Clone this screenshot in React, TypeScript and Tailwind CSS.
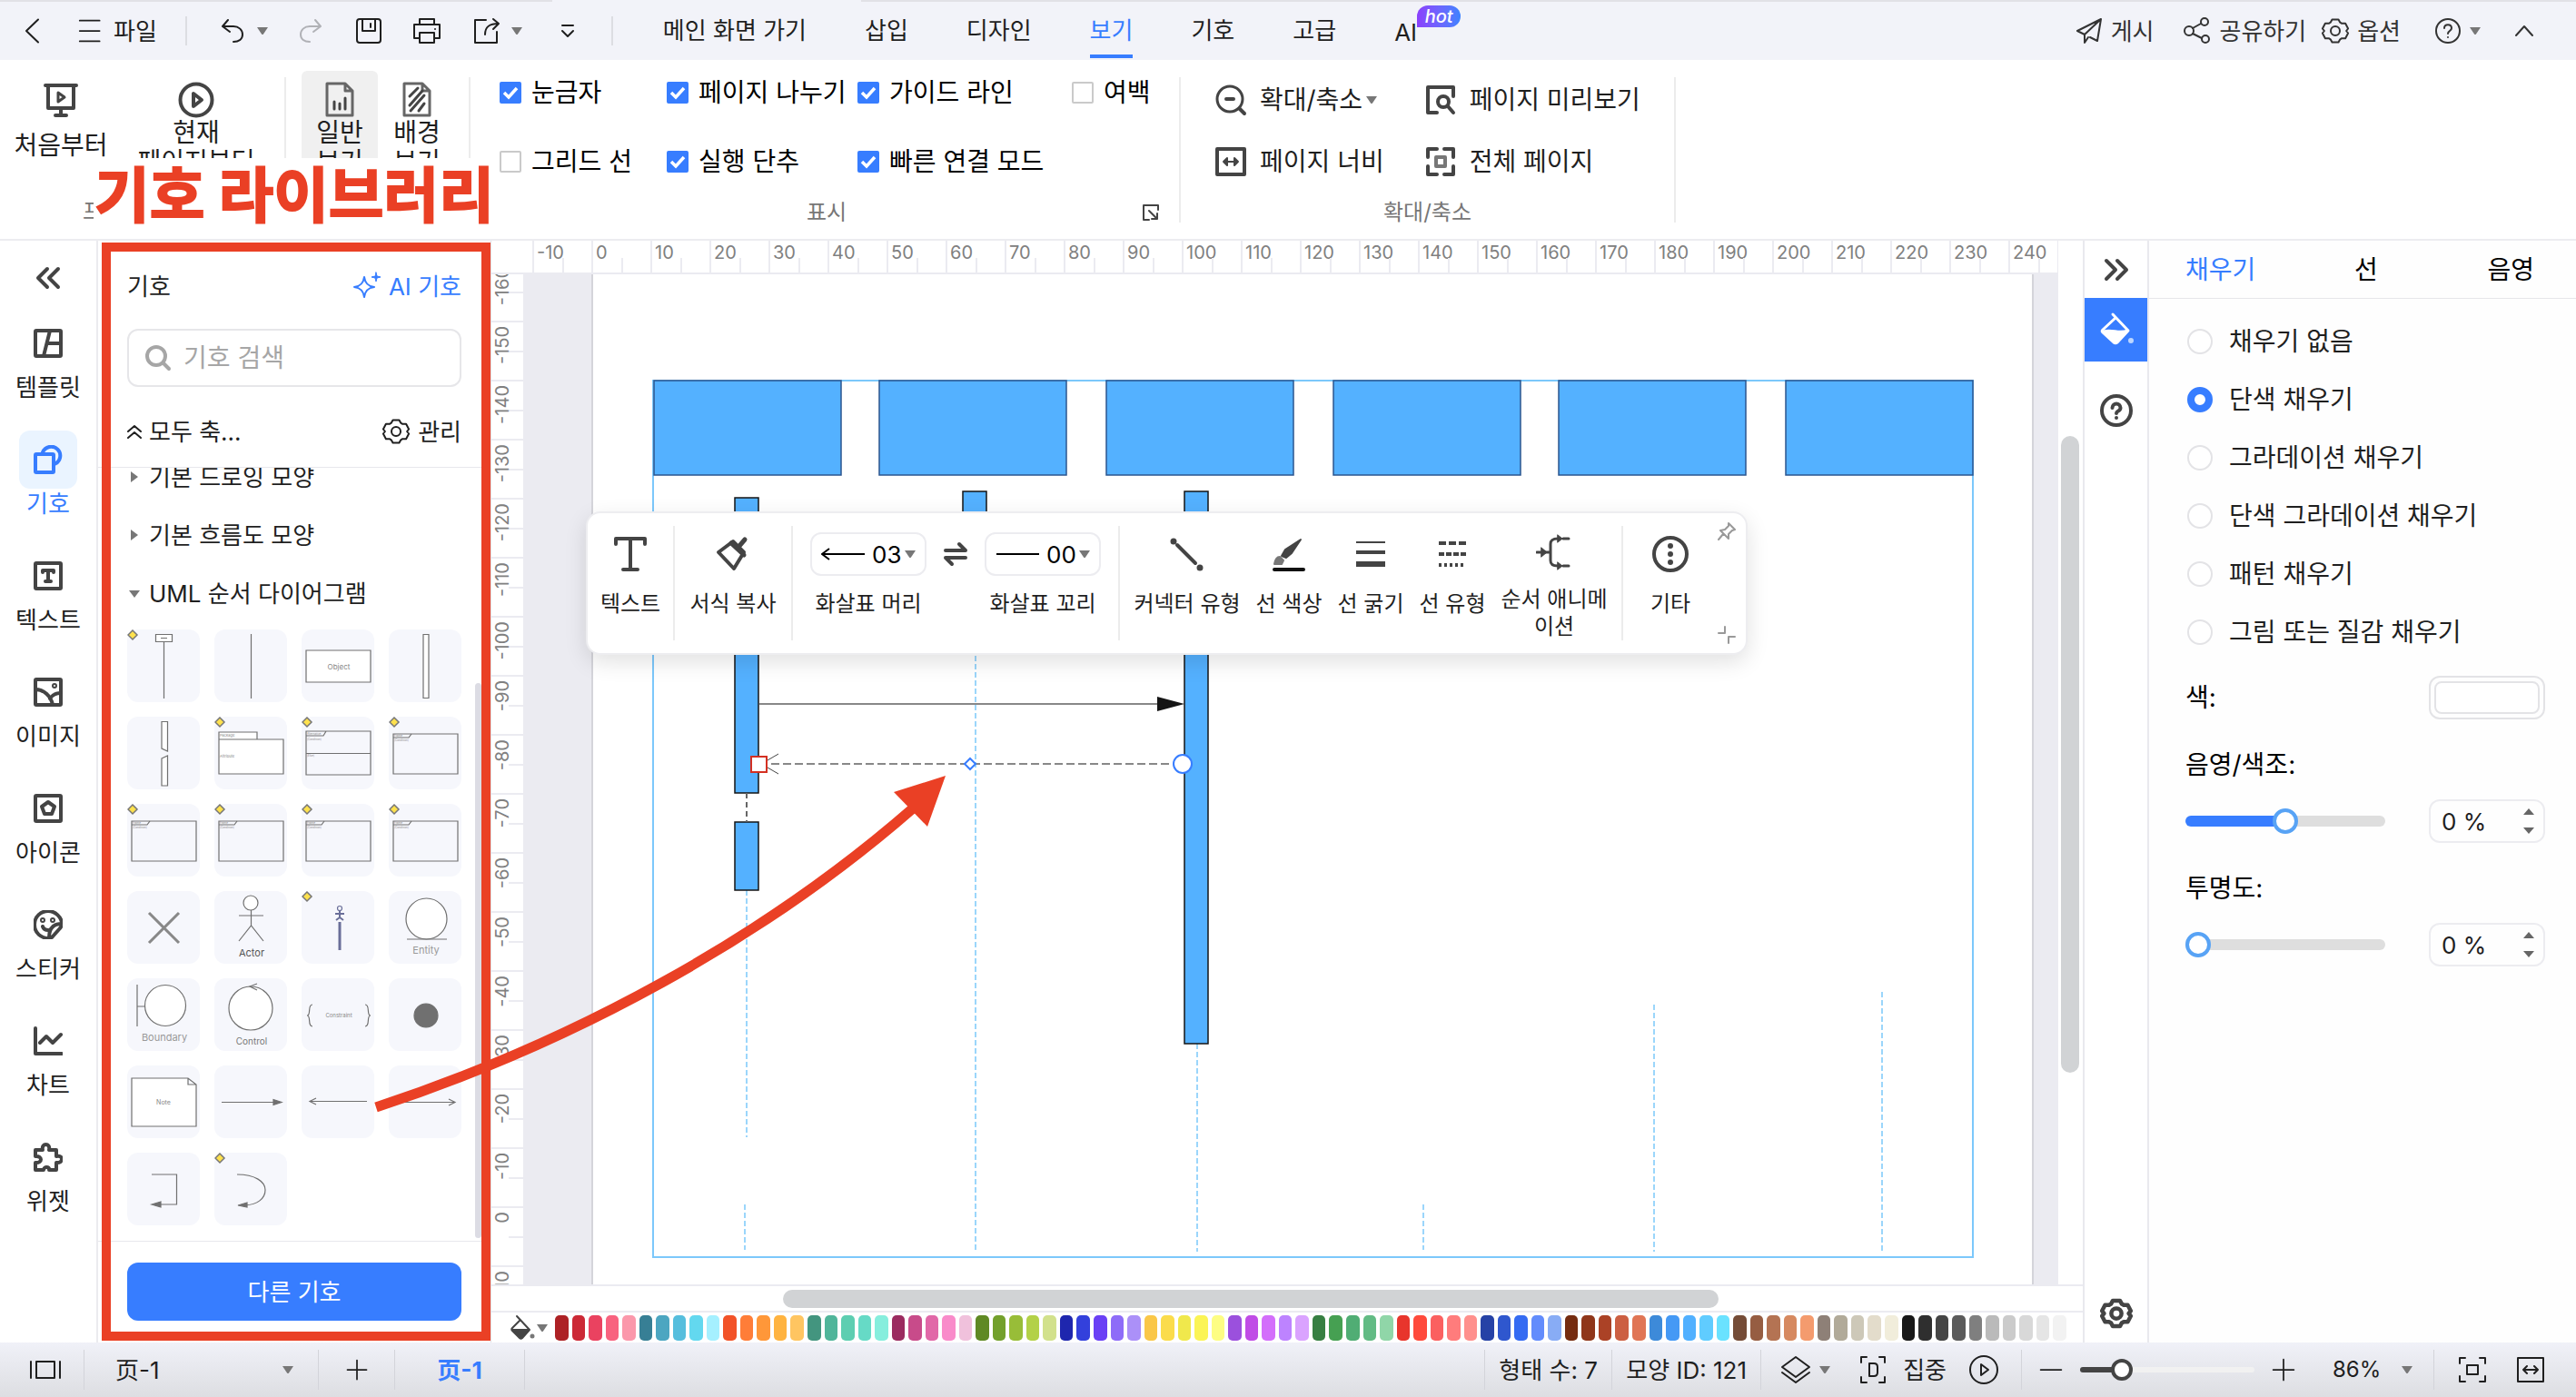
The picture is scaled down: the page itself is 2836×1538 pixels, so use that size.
import { useState } from "react";
import type { ReactNode } from "react";

//################################## DATA ##################################//
const tabs = ["메인 화면 가기", "삽입", "디자인", "보기", "기호", "고급"]

const swatches = [
    "#ad2125", "#cc2936", "#ea4260", "#f8627f", "#fb98ab",
    "#377f95", "#4ca6c1", "#56bedd", "#63d8ef", "#a5f0ff",
    "#f25228", "#ff7d38", "#ff9739", "#ffb340", "#ffc561",
    "#43957f", "#50b59a", "#5dceb1", "#66dac6", "#86eedd",
    "#9b2b60", "#c84b8a", "#e168a8", "#f98bca", "#f0c1dc",
    "#5f8924", "#73a02c", "#98bd38", "#b3d148", "#d2e18c",
    "#1e26ae", "#3340dc", "#6a40f5", "#8e6cf8", "#ab90f8",
    "#fac748", "#fbdc4c", "#f0e84c", "#fbf455", "#fdfd83",
    "#9b50dd", "#c04ce6", "#d36efb", "#bd83ff", "#daa3ff",
    "#377f42", "#46a052", "#50ad74", "#62bb84", "#90d6a8",
    "#e8352c", "#ff4a3c", "#fb6060", "#ff7c7c", "#ff908d",
    "#2642a6", "#2f57ce", "#356bf2", "#628cfc", "#88acf5",
    "#752c10", "#8f361a", "#ab4226", "#cc5f42", "#e07555",
    "#3d8ad9", "#4599f5", "#51b0ff", "#60ccff", "#6ae2ff",
    "#754c37", "#965d42", "#b47353", "#d68960", "#f49b6e",
    "#8e8077", "#b1aa99", "#cdc8b8", "#e3dccb", "#f1eddb",
    "#181818", "#2f2f2f", "#454545", "#5b5b5b", "#7f7f7f", "#bababa",
    "#cbcbcb", "#d8d8d8", "#e5e5e5", "#f2f2f2", "#ffffff",
]

const hTicks = Array.from({ length: 26 }, (_, i) => (i - 1) * 10)
const vTicks = Array.from({ length: 18 }, (_, i) => (i - 16) * 10)

const fills = ["채우기 없음", "단색 채우기", "그라데이션 채우기", "단색 그라데이션 채우기", "패턴 채우기", "그림 또는 질감 채우기"]

//################################## SMALL PARTS ###########################//
type IconProps = { children: ReactNode; size?: string; box?: string; sw?: number; fill?: string }

function Icon({ children, size = "h-8 w-8", box = "0 0 32 32", sw = 2, fill = "none" }: IconProps) {
    return (
        <svg className={`${size} shrink-0`} viewBox={box} fill={fill} stroke="currentColor" strokeWidth={sw} strokeLinecap="round" strokeLinejoin="round" aria-hidden="true">
            {children}
        </svg>
    )
}

function Caret() {
    return (
        <svg className="h-2 w-3 shrink-0 text-[#777]" viewBox="0 0 12 8" fill="currentColor" aria-hidden="true">
            <path d="M0 0h12L7 7.500q-1 1-2 0z" />
        </svg>
    )
}

function Gear({ size = "h-8 w-8", sw = 2 }: { size?: string; sw?: number }) {
    return (
        <Icon size={size} sw={sw}>
            <path d="M12.5 3.5h7l1.8 3.2 1.9 1.1h3.9l3 5.7-2 2.5 2 2.5-3 5.7h-3.9l-1.9 1.1-1.8 3.2h-7l-1.8-3.2-1.9-1.1H4.900l-3-5.700 2-2.500-2-2.500 3-5.700h3.900l1.900-1.100z" />
            <circle cx="16" cy="16" r="5" />
        </Icon>
    )
}

function Check({ label, on = false }: { label: string; on?: boolean }) {
    return (
        <label className="flex h-8 items-center gap-[11px] whitespace-nowrap text-[28px] text-black">
            <span className="grid h-6 w-6">
                <input type="checkbox" defaultChecked={on} className="peer col-start-1 row-start-1 h-6 w-6 appearance-none rounded-[2px] border-2 border-[#cacaca] bg-white checked:border-[#377dff] checked:bg-[#377dff]" />
                <svg className="pointer-events-none invisible col-start-1 row-start-1 h-6 w-6 text-white peer-checked:visible" viewBox="0 0 24 24" fill="none" stroke="currentColor" strokeWidth="3.500" aria-hidden="true">
                    <path d="M5 12l5 5 9-10" />
                </svg>
            </span>
            {label}
        </label>
    )
}

function RibbonButton({ icon, lines, active = false, width }: { icon: ReactNode; lines: string[]; active?: boolean; width: string }) {
    return (
        <button className={`flex h-[136px] flex-col items-center rounded-md pt-3 text-[28px] leading-8 text-[#1f1f1f] ${width} ${active ? "bg-[#f0f0f0]" : ""}`}>
            <span className="text-[#444]">{icon}</span>
            <span className={`whitespace-nowrap ${lines.length === 1 ? "mt-[14px]" : ""}`}>
                {lines.map((l) => <span key={l} className="block">{l}</span>)}
            </span>
        </button>
    )
}

function ZoomButton({ icon, label, caret = false }: { icon: ReactNode; label: string; caret?: boolean }) {
    return (
        <button className="flex h-10 items-center whitespace-nowrap text-[28px] text-[#1f1f1f]">
            <span className="mr-[14px] text-[#444]">{icon}</span>
            {label}
            {caret && <span className="ml-1 flex"><Caret /></span>}
        </button>
    )
}

//################################## TOP BAR ###############################//
function TopBar() {
    return (
        <header className="flex h-[66px] shrink-0 flex-col bg-[#f2f3f9] text-[26px] text-[#1f1f1f]">
            <div className="flex h-[2px] w-full">
                <div className="w-[608px] bg-[#e1e1e6]" />
                <div className="w-[340px]" />
                <div className="flex-1 bg-[#e1e1e6]" />
            </div>
            <div className="flex flex-1 items-center">
                <button aria-label="뒤로" className="ml-5"><Icon><path d="M22 3.500L9 16l13 12.500" /></Icon></button>
                <button className="ml-[34px] flex items-center gap-[11px]">
                    <Icon size="h-7 w-7"><path d="M2 3h25M2 16h25M2 29h25" /></Icon>
                    파일
                </button>
                <div className="ml-[31px] h-8 w-[2px] bg-[#dcdde2]" />
                <button aria-label="실행 취소" className="ml-[34px] flex items-center gap-[11px]">
                    <Icon><path d="M11 4L5 11l8 6M5 11h12c6 0 10 4 10 9s-4 8-10 8" /></Icon>
                    <Caret />
                </button>
                <button aria-label="다시 실행" className="ml-[31px] text-[#b0b1b6]">
                    <Icon><path d="M21 4l6 7-8 6M27 11H15C9 11 5 15 5 20s4 8 10 8" /></Icon>
                </button>
                <button aria-label="저장" className="ml-8">
                    <Icon><rect x="3" y="3" width="26" height="26" rx="3" /><path d="M9 3v13h14V3M18 8v4" /></Icon>
                </button>
                <button aria-label="인쇄" className="ml-8">
                    <Icon><path d="M8 9V3h16v6M8 24H2V9h28v15h-6M8 18h16v11H8zM25 14v0" /></Icon>
                </button>
                <button aria-label="내보내기" className="ml-[34px] flex items-center gap-[11px]">
                    <Icon><path d="M15 4H3v25h24V17M14 20c0-8 4-12 15-12M23 3l6 5-6 6" /></Icon>
                    <Caret />
                </button>
                <button aria-label="사용자 지정" className="ml-[34px]">
                    <Icon><path d="M10 10h12M10 16l6 6 6-6" /></Icon>
                </button>
                <div className="ml-[32px] h-8 w-[2px] bg-[#dcdde2]" />
                <nav className="ml-[55px] flex gap-16 self-stretch">
                    {tabs.map((t) => (
                        <a key={t} href="#" className={`flex items-center whitespace-nowrap border-b-4 ${t === "보기" ? "border-[#377dff] text-[#377dff]" : "border-transparent"} mb-[-2px] h-[62px] pt-1`}>
                            {t}
                        </a>
                    ))}
                    <a href="#" className="relative flex h-[62px] items-center pt-1 text-[26px]">
                        AI
                        <span className="absolute left-[25px] top-1 flex h-6 w-12 items-center justify-center rounded-t-xl rounded-br-xl bg-gradient-to-r from-[#8a3ffc] to-[#3b82ff] text-[20px] font-medium italic leading-6 text-white">hot</span>
                    </a>
                </nav>
                <div className="flex-1" />
                <div className="flex items-center text-[#333]">
                    <button className="flex items-center gap-2">
                        <Icon><path d="M29 3L3 16l8 4L29 3l-4 24-8-4M11 20v9l4-6" /></Icon>게시
                    </button>
                    <button className="ml-8 flex items-center gap-2">
                        <Icon><circle cx="24" cy="6" r="4" /><circle cx="7" cy="16" r="5" /><circle cx="25" cy="25" r="4" /><path d="M11 13l9-5M11 19l10 5" /></Icon>공유하기
                    </button>
                    <button className="ml-4 flex items-center gap-2">
                        <Gear />옵션
                    </button>
                    <button aria-label="도움말" className="ml-9 flex items-center gap-2">
                        <Icon><circle cx="16" cy="16" r="13" /><path d="M12 13c0-5 8-5 8 0 0 3-4 3-4 6M16 23v0" /></Icon>
                        <Caret />
                    </button>
                    <button aria-label="리본 접기" className="ml-8 mr-[41px]"><Icon><path d="M7 21l9-10 9 10" /></Icon></button>
                </div>
            </div>
        </header>
    )
}

//################################## RIBBON ################################//
function Ribbon() {
    return (
        <section className="relative flex h-[199px] shrink-0 border-b-2 border-[#ececf0] bg-white">
            <div className="flex h-[108px] w-[518px] overflow-hidden">
                <div className="flex w-[313px] items-start pt-3">
                    <RibbonButton width="w-[134px]" lines={["처음부터"]} icon={
                        <Icon size="h-10 w-10" box="0 0 40 40" sw={4}><path d="M3 4h34M6 5v24h28V5M20 30v6M14 37h12" /><path d="M17 12v10l7-5z" strokeWidth="3" /></Icon>
                    } />
                    <RibbonButton width="w-[164px]" lines={["현재", "페이지부터"]} icon={
                        <Icon size="h-10 w-10" box="0 0 40 40" sw={4}><circle cx="20" cy="20" r="17.500" /><path d="M17 13v14l9-7z" /></Icon>
                    } />
                </div>
                <div className="mt-[19px] w-[2px] bg-[#ececec]" />
                <div className="flex w-[201px] items-start gap-px pl-[17px] pt-3">
                    <RibbonButton active width="w-[84px]" lines={["일반", "보기"]} icon={
                        <Icon size="h-10 w-10" box="0 0 40 40" sw={3}><path d="M6 2h20l8 8v27H6zM26 2v8h8" stroke="#666" /><path d="M14 30v-8M20 30v-6M26 30V18" /></Icon>
                    } />
                    <RibbonButton width="w-[84px]" lines={["배경", "보기"]} icon={
                        <Icon size="h-10 w-10" box="0 0 40 40" sw={3}><path d="M6 2h20l8 8v27H6zM26 2v8h8" stroke="#666" /><path d="M12 16l9-9M12 26l14-16M13 32l15-17M22 32l6-8" /></Icon>
                    } />
                </div>
                <div className="mt-[19px] w-[2px] bg-[#ececec]" />
            </div>

            <div className="flex w-[780px] flex-col">
                <div className="mt-5 flex gap-0 pl-8">
                    <div className="flex w-[184px] flex-col gap-11"><Check label="눈금자" on /><Check label="그리드 선" /></div>
                    <div className="flex w-[210px] flex-col gap-11"><Check label="페이지 나누기" on /><Check label="실행 단추" on /></div>
                    <div className="flex w-[236px] flex-col gap-11"><Check label="가이드 라인" on /><Check label="빠른 연결 모드" on /></div>
                    <div className="flex flex-col"><Check label="여백" /></div>
                </div>
                <div className="mt-5 flex h-10 items-center pl-[45px]">
                    <span className="flex-1 text-center text-[24px] text-[#777]">표시</span>
                    <button aria-label="표시 옵션" className="mr-[21px] text-[#444]">
                        <Icon size="h-5 w-5" box="0 0 20 20"><path d="M8 18H2V2h16v5M8 8l9 9M17 11v6h-6" /></Icon>
                    </button>
                </div>
            </div>
            <div className="mt-[19px] h-40 w-[2px] bg-[#ececec]" />

            <div className="flex w-[543px] flex-col">
                <div className="mt-6 flex gap-11 pl-[37px]">
                    <div className="flex flex-col gap-7">
                        <ZoomButton caret label="확대/축소" icon={<Icon size="h-9 w-9" box="0 0 36 36" sw={3}><circle cx="17" cy="17" r="14" /><path d="M13 17h8" strokeWidth="4" /><path d="M28 28l5 5" strokeWidth="4" /></Icon>} />
                        <ZoomButton label="페이지 너비" icon={<Icon size="h-9 w-9" box="0 0 36 36" sw={4}><rect x="3" y="4" width="30" height="28" /><path d="M10 18h16M14 14l-4 4 4 4zM22 14l4 4-4 4z" strokeWidth="2" fill="currentColor" /></Icon>} />
                    </div>
                    <div className="flex flex-col gap-7">
                        <ZoomButton label="페이지 미리보기" icon={<Icon size="h-9 w-9" box="0 0 36 36" sw={4}><path d="M14 32H4V4h28v10" /><circle cx="21" cy="20" r="6" /><path d="M26 25l6 7" /></Icon>} />
                        <ZoomButton label="전체 페이지" icon={<Icon size="h-9 w-9" box="0 0 36 36" sw={4}><path d="M14 4H4v9M22 4h10v9M32 23v9H22M14 32H4v-9" /><path d="M13 13h10v10H13z" stroke="#777" /></Icon>} />
                    </div>
                </div>
                <div className="mt-4 flex h-10 items-center justify-center text-[24px] text-[#777]">확대/축소</div>
            </div>
            <div className="mt-[19px] h-40 w-[2px] bg-[#ececec]" />

            <span className="absolute left-[91px] top-[151px] w-3 overflow-hidden text-[24px] leading-8 text-[#777]">프</span>
            <div className="absolute left-[103px] top-[108px] flex h-[88px] w-[442px] justify-center">
                <h1 className="whitespace-nowrap font-['Noto_Sans_CJK_KR',sans-serif] text-[66px] font-bold leading-[72px] text-[#ea4025] [-webkit-text-stroke:2px_#ea4025]">기호 라이브러리</h1>
            </div>
        </section>
    )
}

//################################## LEFT RAIL #############################//
const railItems: { label: string; icon: ReactNode }[] = [
    { label: "템플릿", icon: <><rect x="2" y="2" width="28" height="28" rx="1" /><path d="M18 2l-7 28M16 16h14" /></> },
    { label: "기호", icon: <><rect x="2" y="10" width="20" height="20" rx="1" /><path d="M10 8a10 10 0 1 1 13 13" /></> },
    { label: "텍스트", icon: <><rect x="2" y="2" width="28" height="28" rx="1" /><path d="M10 12v-2h12v2M16 10v12M13 22h6" /></> },
    { label: "이미지", icon: <><rect x="2" y="2" width="28" height="28" rx="1" /><path d="M2 13c9 0 17 7 19 17M30 17c-7 0-10 3-12 6" /><circle cx="23" cy="9" r="1" /></> },
    { label: "아이콘", icon: <><rect x="2" y="2" width="28" height="28" rx="1" /><path d="M16 9l7 5-3 8h-8l-3-8z" /></> },
    { label: "스티커", icon: <><path d="M17 31C8 31 1 25 1 16S8 1 16 1s15 7 15 14c0 2-1 4-2 5L21 29c-1 1-2 2-4 2zM31 15c-9 0-14 5-14 15M10 18c1 3 4 4 6 4" /><circle cx="10" cy="11" r="1" /><circle cx="21" cy="11" r="1" /></> },
    { label: "차트", icon: <path d="M2 2v28h29M7 18l7-7 7 7 9-9" /> },
    { label: "위젯", icon: <path d="M2 8h8c-2-8 9-8 7 0h8v7c8-2 8 8 0 7v8h-8c1-4-6-4-6 0H2v-8c8 1 8-8 0-7z" /> },
]

function LeftRail() {
    return (
        <nav className="flex w-[108px] shrink-0 flex-col items-center border-r-2 border-[#ebebef] bg-white text-[26px] text-[#1f1f1f]">
            <button aria-label="접기" className="mt-[25px] flex h-8 items-center text-[#444]">
                <Icon sw={4}><path d="M15 6L5 16l10 10M27 6L17 16l10 10" /></Icon>
            </button>
            <div className="mt-6 flex flex-col gap-[30px]">
                {railItems.map((r) => (
                    <button key={r.label} className={`flex flex-col items-center leading-[34px] ${r.label === "기호" ? "text-[#377dff]" : ""}`}>
                        <span className={`flex h-16 w-16 items-center justify-center rounded-xl ${r.label === "기호" ? "bg-[#eaf4ff]" : "text-[#444]"}`}>
                            <Icon sw={4}>{r.icon}</Icon>
                        </span>
                        {r.label}
                    </button>
                ))}
            </div>
        </nav>
    )
}

//################################## SYMBOL PANEL ##########################//
const frame = (
    <g>
        <path d="M5 19h71v44H5z" />
        <path d="M5 23h17l3-4" />
        <text x="6" y="22" fontSize="3" stroke="none" fill="#888">Frame</text>
        <text x="6" y="27" fontSize="3" stroke="none" fill="#888">[Condition]</text>
    </g>
)

const symbols: { name: string; mark?: boolean; art: ReactNode }[] = [
    { name: "lifeline", mark: true, art: <><path d="M31.500 5.500h18v8h-18z" fill="#fff" /><path d="M40.500 13v63M37 9.500h7" /></> },
    { name: "line", art: <path d="M40.500 5v71" /> },
    { name: "object", art: <><path d="M5 23h71v35H5z" fill="#fff" /><text x="41" y="44" fontSize="8" textAnchor="middle" stroke="none" fill="#888">Object</text></> },
    { name: "activation", art: <path d="M38 5.500h6v70h-6z" fill="#fff" /> },
    { name: "break", art: <path d="M38 5.500h6.500V38L38 35zM38 46l6.500-3v33H38z" fill="#fff" /> },
    { name: "package", mark: true, art: <><path d="M5 25V17h42v8M5 25h71v38H5z" fill="#fff" /><text x="6" y="22" fontSize="4" stroke="none" fill="#888">Package</text><text x="6" y="45" fontSize="4" stroke="none" fill="#888">Attribute</text></> },
    { name: "alternative", mark: true, art: <><path d="M5 16h71v48H5zM5 40.500h71M5 21h19l3-5" /><text x="6" y="20" fontSize="3" stroke="none" fill="#888">Alternative</text><text x="6" y="26" fontSize="3" stroke="none" fill="#888">[Condition]</text><text x="6" y="44" fontSize="3" stroke="none" fill="#888">[Else]</text></> },
    { name: "loop", mark: true, art: frame },
    { name: "opt", mark: true, art: frame },
    { name: "par", mark: true, art: frame },
    { name: "ref", mark: true, art: frame },
    { name: "neg", mark: true, art: frame },
    { name: "destroy", art: <path d="M24 24l33 33M57 24L24 57" strokeWidth="3" stroke="#888" /> },
    { name: "actor", art: <><circle cx="40" cy="13" r="8" fill="#fff" /><path d="M40.500 21v17M27 27h27M27 55l13.500-17L54 55" /><text x="41" y="72" fontSize="11" textAnchor="middle" stroke="none" fill="#555">Actor</text></> },
    { name: "actor lifeline", mark: true, art: <g stroke="#6a6f99"><circle cx="42" cy="19" r="2.500" /><path d="M42 22v7M37 25h10M38 32l4-3 4 3" strokeWidth="2" /><path d="M42 34v31" strokeWidth="3" /></g> },
    { name: "entity", art: <><circle cx="41.500" cy="30.500" r="22.500" fill="#fff" /><path d="M20 53h44" /><text x="41" y="69" fontSize="11" textAnchor="middle" stroke="none" fill="#999">Entity</text></> },
    { name: "boundary", art: <><path d="M11 7v46M11 31h9" /><circle cx="42" cy="30" r="22.500" fill="#fff" /><text x="41" y="69" fontSize="11" textAnchor="middle" stroke="none" fill="#999">Boundary</text></> },
    { name: "control", art: <><circle cx="40" cy="33" r="24" fill="#fff" /><path d="M47 6l-8 3 8 4" /><text x="41" y="73" fontSize="10" textAnchor="middle" stroke="none" fill="#777">Control</text></> },
    { name: "constraint", art: <><path d="M12 29c-6 0-1 12-6 12 5 0 0 12 6 12M70 29c6 0 1 12 6 12-5 0 0 12-6 12" /><text x="41" y="43" fontSize="6" textAnchor="middle" stroke="none" fill="#888">Constraint</text></> },
    { name: "start", art: <circle cx="41" cy="41" r="13" fill="#707070" stroke="#707070" /> },
    { name: "note", art: <><path d="M5 14h62l9 7v46H5zM67 14v7h9" fill="#fff" /><text x="40" y="43" fontSize="7" textAnchor="middle" stroke="none" fill="#888">Note</text></> },
    { name: "message", art: <><path d="M8 40.500h57" /><path d="M65 37.500l9 3-9 3z" fill="#707070" /></> },
    { name: "return", art: <path d="M9 39.500h63M16 36l-7 3.500 7 3.500" /> },
    { name: "async", art: <path d="M8 40.500h65M66 37l7 3.500-7 3.500" /> },
    { name: "self", art: <><path d="M27 24h27.500v33H36" /><path d="M27 57l10-3v6z" fill="#707070" /></> },
    { name: "callback", mark: true, art: <><path d="M25 24c20 0 31 8 31 17 0 10-9 16-22 17" /><path d="M26 58l10-3v5z" fill="#707070" /></> },
]

function SymbolPanel() {
    return (
        <aside className="relative flex w-[433px] shrink-0 flex-col border-r border-[#e2e2e8] bg-white text-[26px] text-[#1f1f1f]">
            <div className="flex flex-col border-b border-[#e8e8ec] px-8 pb-[19px]">
                <div className="mt-[30px] flex h-10 items-center justify-between">
                    <h2>기호</h2>
                    <button className="flex items-center gap-2 text-[#377dff]">
                        <Icon><path d="M13 6c1 7 4 10 11 11-7 1-10 4-11 11C12 21 9 18 2 17c7-1 10-4 11-11z" /><path d="M26 1l1 4 4 1-4 1-1 4-1-4-4-1 4-1z" fill="currentColor" strokeWidth="1" /></Icon>
                        AI 기호
                    </button>
                </div>
                <label className="mt-[27px] flex h-16 items-center gap-3 rounded-xl border-2 border-[#e6e6e9] pl-4">
                    <span className="text-[#a6a6a6]"><Icon box="0 0 32 32" sw={4}><circle cx="14" cy="14" r="10" /><path d="M22 22l6 6" /></Icon></span>
                    <input type="text" placeholder="기호 검색" aria-label="기호 검색" className="w-64 bg-transparent text-[28px] outline-none placeholder:text-[#a6a6a6]" />
                </label>
                <div className="mt-[29px] flex h-10 items-center justify-between">
                    <button className="flex items-center gap-2">
                        <Icon size="h-4 w-4" box="0 0 16 16" sw={2}><path d="M1 8l7-6 7 6M1 15l7-6 7 6" /></Icon>
                        모두 축...
                    </button>
                    <button className="flex items-center gap-2"><Gear />관리</button>
                </div>
            </div>

            <div className="min-h-0 flex-1 overflow-hidden px-8">
                <div className="-mt-[22px] flex flex-col">
                    {["기본 드로잉 모양", "기본 흐름도 모양", "UML 순서 다이어그램"].map((s, i) => (
                        <button key={s} className="flex h-16 items-center gap-2 text-left">
                            <Icon size="h-4 w-4 text-[#777]" box="0 0 16 16" fill="currentColor" sw={0}>
                                <path d={i === 2 ? "M2 5h12l-6 8z" : "M4 2v12l8-6z"} />
                            </Icon>
                            {s}
                        </button>
                    ))}
                </div>
                <div className="mt-2 grid grid-cols-4 gap-4">
                    {symbols.map((s) => (
                        <button key={s.name} aria-label={s.name} className="h-20 w-20 rounded-xl bg-[#f6f7fc]">
                            <svg viewBox="0 0 80 80" className="h-20 w-20" fill="none" stroke="#707070" strokeWidth="1.200" aria-hidden="true">
                                {s.art}
                                {s.mark && <path d="M6 1l5 5-5 5-5-5z" fill="#ffe14d" stroke="#777" strokeWidth="1.500" />}
                            </svg>
                        </button>
                    ))}
                </div>
            </div>
            <div className="border-t border-[#e8e8ec] px-8 pb-6 pt-[23px]">
                <button className="h-16 w-full rounded-xl bg-[#377dff] text-white">다른 기호</button>
            </div>

            <div className="absolute right-[10px] top-[487px] h-[611px] w-[7px] rounded-full bg-[#dcdce4]" />
            <div className="pointer-events-none absolute bottom-[2px] left-1 right-0 top-[2px] border-[10px] border-[#ea4025]" />
        </aside>
    )
}

//################################## FLOATING BAR ##########################//
function Tool({ icon, label, width }: { icon: ReactNode; label: ReactNode; width: string }) {
    return (
        <button className={`flex flex-col items-center ${width}`}>
            <span className="flex h-12 items-center text-[#444]">{icon}</span>
            <span className="mt-4 block whitespace-nowrap leading-[30px]">{label}</span>
        </button>
    )
}

function ArrowSelect({ label, value, head = false }: { label: string; value: string; head?: boolean }) {
    return (
        <label className="flex w-[130px] flex-col items-center">
            <span className="flex h-12 w-32 items-center justify-center rounded-xl border-2 border-[#ececf0]">
                <svg className="h-4 w-12 text-black" viewBox="0 0 48 16" fill="none" stroke="currentColor" strokeWidth="2" aria-hidden="true">
                    <path d="M1 8h47" />
                    {head && <path d="M9 2L1 8l8 6" />}
                </svg>
                <select defaultValue={value} className="ml-2 w-9 appearance-none bg-transparent text-[26px] text-black">
                    <option>{value}</option>
                </select>
                <Caret />
            </span>
            <span className="mt-4 leading-[30px]">{label}</span>
        </label>
    )
}

function FloatingBar() {
    return (
        <div className="absolute left-[67px] top-[261px] flex h-[158px] rounded-2xl border-2 border-[#ededf0] bg-white py-[14px] text-center text-[24px] text-[#1f1f1f] shadow-[0_8px_24px_rgba(0,0,0,0.12)]">
            <div className="flex justify-center border-r-2 border-[#ececec] px-[11px] pt-[7px]">
                <Tool width="w-[72px]" label="텍스트" icon={<Icon size="h-10 w-10" box="0 0 40 40" sw={4}><path d="M4 9V3h32v6M20 3v33M12 37h16" /></Icon>} />
            </div>
            <div className="flex justify-center border-r-2 border-[#ececec] px-3 pt-[7px]">
                <Tool width="w-[104px]" label="서식 복사" icon={<Icon size="h-10 w-10" box="0 0 40 40" sw={4}><path d="M4 18l16-12 12 12-11 18z" /><path d="M27 11l6-7M18 8l14 13" strokeWidth="5" /></Icon>} />
            </div>
            <div className="flex border-r-2 border-[#ececec] px-[18px] pt-[7px]">
                <ArrowSelect head label="화살표 머리" value="03" />
                <button aria-label="바꾸기" className="flex h-12 w-[62px] items-center justify-center text-[#444]">
                    <Icon size="h-7 w-7" box="0 0 28 28" sw={4}><path d="M3 10h22l-7-7M25 18H3l7 7" /></Icon>
                </button>
                <ArrowSelect label="화살표 꼬리" value="00" />
            </div>
            <div className="flex gap-[18px] border-r-2 border-[#ececec] px-4 pt-[7px]">
                <Tool width="w-[116px]" label="커넥터 유형" icon={<Icon size="h-10 w-10" box="0 0 40 40" sw={3}><circle cx="5" cy="6" r="2" fill="currentColor" /><circle cx="34" cy="35" r="2" fill="currentColor" /><path d="M9 10l20 20" strokeWidth="4" /></Icon>} />
                <Tool width="w-[72px]" label="선 색상" icon={<Icon size="h-10 w-10" box="0 0 40 40" sw={2} fill="currentColor"><path d="M33 4L16 15l-4 7 5 2 6-5z" /><path d="M10 23l4 4-2 4H4c1-6 3-8 6-8z" fill="#777" stroke="#777" /><path d="M4 37h32" strokeWidth="4" stroke="#111" /></Icon>} />
                <Tool width="w-[72px]" label="선 굵기" icon={<Icon size="h-10 w-10" box="0 0 40 40" sw={0} fill="currentColor"><path d="M4 6h32v2H4zM4 16h32v4H4zM4 28h32v6H4z" /></Icon>} />
                <Tool width="w-[72px]" label="선 유형" icon={
                    <svg className="h-10 w-10" viewBox="0 0 40 40" fill="none" stroke="currentColor" strokeWidth="4" aria-hidden="true">
                        <path d="M5 8h30" strokeDasharray="8 3" /><path d="M5 20h30" strokeDasharray="6 2" /><path d="M5 32h30" strokeDasharray="3 3" />
                    </svg>
                } />
                <Tool width="w-[116px]" label={<>순서 애니메<br />이션</>} icon={<Icon size="h-10 w-10" box="0 0 40 40" sw={3}><path d="M24 5c-6 0-8 2-8 6v18c0 4 2 6 8 6M1 20h14M30 5h6M30 35h6" /><path d="M6 15l6 5-6 5zM24 1l5 4-5 4zM24 31l5 4-5 4z" fill="currentColor" strokeWidth="1" /></Icon>} />
            </div>
            <div className="flex px-4 pt-[7px]">
                <Tool width="w-[72px]" label="기타" icon={<Icon size="h-10 w-10" box="0 0 40 40" sw={4}><circle cx="20" cy="20" r="18" /><path d="M20 11v0M20 20v0M20 29v0" strokeWidth="6" /></Icon>} />
            </div>
            <div className="-my-1 flex w-[31px] flex-col items-start justify-between text-[#999]">
                <button aria-label="고정"><Icon size="h-5 w-5" box="0 0 20 20"><path d="M12 1l7 7-3 1-4 4v5L3 9l5-1 4-4zM6 13l-5 6" /></Icon></button>
                <button aria-label="축소"><Icon size="h-5 w-5" box="0 0 20 20"><path d="M1 8h7V1M12 19v-7h7" /></Icon></button>
            </div>
        </div>
    )
}

//################################## DIAGRAM ###############################//
// drawing units are pixels at 86% zoom
function Diagram() {
    const heads = [69, 317, 567, 817, 1065, 1315]
    const dashes = [[171, 678, 950], [169, 1024, 1074], [423, 240, 1076], [667, 847, 1076], [916, 1024, 1074], [1170, 804, 1076], [1421, 790, 1076]]
    return (
        <svg className="h-[1112px] w-[1584px]" viewBox="2 0 1584 1112" fill="none" aria-hidden="true">
            <rect x="68" y="117" width="1453" height="965" stroke="#7cc8fb" strokeWidth="2" />
            {dashes.map(([x, a, b]) => (
                <path key={`${x}-${a}`} d={`M${x} ${a}V${b}`} stroke="#9bd6fb" strokeWidth="2" strokeDasharray="6 3" />
            ))}
            {heads.map((x) => <rect key={x} x={x} y="117" width="206" height="104" fill="#54b1ff" stroke="#2b568f" strokeWidth="1.500" />)}
            <g fill="#54b1ff" stroke="#151515" strokeWidth="1.500">
                <rect x="158" y="246" width="26" height="325" />
                <rect x="158" y="603" width="26" height="75" />
                <rect x="409" y="239" width="26" height="60" />
                <rect x="653" y="239" width="26" height="608" />
            </g>
            <path d="M171 571v32" stroke="#666" strokeWidth="2" strokeDasharray="6 4" />
            <path d="M185 473h440" stroke="#888" strokeWidth="2" />
            <path d="M623 465l30 8-30 8z" fill="#151515" />
            <path d="M198 539h442" stroke="#888" strokeWidth="2" strokeDasharray="9 4" />
            <path d="M206 528l-12 7M206 550l-12-7" stroke="#444" />
            <rect x="176" y="531" width="17" height="17" fill="#fff" stroke="#d43022" strokeWidth="2" />
            <path d="M417 533l6 6-6 6-6-6z" fill="#fff" stroke="#377dff" strokeWidth="2" />
            <circle cx="651" cy="539" r="10" fill="#fff" stroke="#377dff" strokeWidth="2" />
        </svg>
    )
}

//################################## CANVAS ################################//
function Canvas() {
    return (
        <main className="flex min-w-0 flex-1 flex-col bg-white">
            <div className="flex min-h-0 flex-1">
                <div className="flex min-w-0 flex-1 flex-col">
                    <div className="flex h-[37px] shrink-0 overflow-hidden border-b-2 border-[#ebebf1] pl-[45px] text-[20px] leading-6 text-[#808080]">
                        {hTicks.map((t) => (
                            <div key={t} className="flex w-[65px] shrink-0 items-end border-l-2 border-[#ebebf1]">
                                <span className="w-[31px] self-start whitespace-nowrap pl-[3px] pt-px">{t}</span>
                                <span className="h-4 w-[2px] bg-[#ebebf1]" />
                            </div>
                        ))}
                    </div>
                    <div className="flex min-h-0 flex-1">
                        <div className="w-[37px] shrink-0 overflow-hidden border-r-2 border-[#ebebf1] text-[20px] leading-[22px] text-[#808080]">
                            <div className="-mt-[14px] flex flex-col">
                                {vTicks.map((t) => (
                                    <div key={t} className="flex h-[65px] items-start border-t-2 border-[#ebebf1]">
                                        <span className="ml-px mt-1 w-[18px] rotate-180 whitespace-nowrap [writing-mode:vertical-rl]">{t}</span>
                                        <span className="mt-[31px] h-[2px] flex-1 bg-[#ebebf1]" />
                                    </div>
                                ))}
                            </div>
                        </div>
                        <div className="relative flex min-w-0 flex-1 bg-[#ebebf1]">
                            <div className="ml-[73px] mr-[26px] flex-1 overflow-hidden border-x-2 border-[#d4d4da] bg-white">
                                <Diagram />
                            </div>
                            <FloatingBar />
                        </div>
                    </div>
                </div>
                <div className="w-7 shrink-0 border-l border-[#ebebf1] pl-[3px] pt-[215px]">
                    <div className="h-[701px] w-5 rounded-full bg-[#d1d3d5]" />
                </div>
            </div>
            <div className="h-[31px] shrink-0 border-b-2 border-t-2 border-[#ebebf1] px-[321px] py-1">
                <div className="mr-[80px] h-5 rounded-full bg-[#d1d3d5]" />
            </div>
            <div className="flex h-[33px] shrink-0 items-center pl-[18px]">
                <button aria-label="채우기 색" className="mr-2 flex items-center text-[#444]">
                    <Icon size="h-8 w-8" box="0 0 32 32"><path d="M10 3l14 15-8 9c-1 1-2 1-3 0l-8-8c-1-1-1-2 0-3l9-9" /><path d="M5 18h18l-8 9z" fill="currentColor" /><circle cx="27" cy="25" r="1.500" fill="#777" stroke="#777" /></Icon>
                    <Caret />
                </button>
                <div className="flex h-7 flex-1 gap-[4px]">
                    {swatches.map((c) => <button key={c} aria-label={c} className="flex-1 rounded-[5px]" style={{ backgroundColor: c }} />)}
                </div>
            </div>
        </main>
    )
}

//################################## RIGHT SIDE ############################//
function RightRail() {
    return (
        <div className="flex w-[73px] shrink-0 flex-col items-center border-x-2 border-[#e9e9ee] bg-white text-[#444]">
            <button aria-label="접기" className="flex h-[63px] items-center"><Icon sw={4}><path d="M5 6l10 10L5 26M17 6l10 10-10 10" /></Icon></button>
            <button aria-label="채우기" className="flex h-[70px] w-full items-center justify-center bg-[#377dff] text-white">
                <Icon size="h-10 w-10" box="0 0 40 40" sw={3}><path d="M16 3l17 18-12 13c-1 1-3 1-4 0L5 23c-1-1-1-2 0-3L19 7" /><path d="M6 22c9-3 17 3 26-1L20 34z" fill="currentColor" /><circle cx="36" cy="32" r="2" fill="#bcd6ff" stroke="#bcd6ff" strokeWidth="2" /></Icon>
            </button>
            <button aria-label="도움말" className="mt-9 text-[#444]">
                <Icon size="h-9 w-9" box="0 0 36 36" sw={4}><circle cx="18" cy="18" r="16" /><path d="M13.500 15c0-6 9-6 9 0 0 4-4.500 3-4.500 6M18 26v0" /></Icon>
            </button>
            <div className="flex-1" />
            <button aria-label="설정" className="mb-[14px]"><Gear size="h-9 w-9" sw={4} /></button>
        </div>
    )
}

function Slider({ id, label, start }: { id: string; label: string; start: number }) {
    const [value, setValue] = useState(start)
    return (
        <div className="mt-[30px]">
            <label htmlFor={id} className="block leading-10 text-black">{label}</label>
            <div className="mt-[18px] flex h-12 items-center justify-between">
                <input
                    id={id}
                    type="range"
                    value={value}
                    onChange={(e) => setValue(Number(e.target.value))}
                    className="h-3 w-[220px] appearance-none rounded-full [&::-webkit-slider-thumb]:h-7 [&::-webkit-slider-thumb]:w-7 [&::-webkit-slider-thumb]:appearance-none [&::-webkit-slider-thumb]:rounded-full [&::-webkit-slider-thumb]:border-4 [&::-webkit-slider-thumb]:border-[#58a3f5] [&::-webkit-slider-thumb]:bg-white"
                    style={{ background: `linear-gradient(to right, #377dff ${value}%, #dedede ${value}%)` }}
                />
                <div className="flex h-12 w-32 items-center justify-between rounded-xl border-2 border-[#ececf0] pl-3 pr-[10px]">
                    <input type="text" defaultValue="0 %" aria-label={label} className="w-16 bg-transparent text-[26px] outline-none" />
                    <div className="flex flex-col gap-[14px] text-[#666]">
                        <button aria-label="늘리기"><Icon size="h-[7px] w-3" box="0 0 12 7" sw={0} fill="currentColor"><path d="M0 7h12L6 0z" /></Icon></button>
                        <button aria-label="줄이기"><Icon size="h-[7px] w-3" box="0 0 12 7" sw={0} fill="currentColor"><path d="M0 0h12L6 7z" /></Icon></button>
                    </div>
                </div>
            </div>
        </div>
    )
}

function FillPanel() {
    return (
        <aside className="w-[470px] shrink-0 bg-[#fefefe] text-[28px] text-[#1f1f1f]">
            <div className="flex h-16 items-center justify-between border-b border-[#e6e6ea] pl-10 pr-[46px] text-black">
                <button className="text-[#377dff]">채우기</button>
                <button className="pr-3">선</button>
                <button>음영</button>
            </div>
            <div className="pl-10 pr-[34px] pt-[31px]">
                <div className="flex flex-col gap-8">
                    {fills.map((f, i) => (
                        <label key={f} className="flex h-8 items-center gap-[18px]">
                            <input type="radio" name="fill" defaultChecked={i === 1} className="ml-[2px] h-7 w-7 appearance-none rounded-full border-2 border-[#e3e3e6] bg-white checked:border-8 checked:border-[#377dff]" />
                            {f}
                        </label>
                    ))}
                </div>
                <div className="mt-8 flex h-12 items-center justify-between text-black">
                    색:
                    <button aria-label="색" className="h-12 w-32 rounded-xl border-2 border-[#e3e3e6] p-1">
                        <span className="block h-full rounded-lg border-2 border-[#e3e3e6] bg-white" />
                    </button>
                </div>
                <Slider id="shade" label="음영/색조:" start={50} />
                <Slider id="alpha" label="투명도:" start={0} />
            </div>
        </aside>
    )
}

//################################## STATUS BAR ############################//
function StatusBar() {
    const sep = <div className="h-11 w-px shrink-0 bg-[#d3d4da]" />
    return (
        <footer className="flex h-[60px] shrink-0 items-center bg-gradient-to-b from-[#f0f1f8] to-[#dddee2] text-[26px] text-[#1f1f1f]">
            <button aria-label="페이지 보기" className="flex w-[92px] justify-center pl-2">
                <Icon size="h-9 w-9" box="0 0 36 36"><path d="M2 9v18M34 9v18M8 9h20v18H8z" /></Icon>
            </button>
            {sep}
            <label className="flex w-[257px] items-center pl-[34px]">
                <select aria-label="페이지" className="w-[184px] appearance-none bg-transparent"><option>页-1</option></select>
                <Caret />
            </label>
            {sep}
            <button aria-label="페이지 추가" className="flex w-[83px] justify-center"><Icon size="h-7 w-7"><path d="M16 4v24M4 16h24" /></Icon></button>
            {sep}
            <a href="#" className="flex w-[142px] justify-center font-bold text-[#377dff]">页-1</a>
            {sep}
            <div className="flex-1" />
            {sep}
            <span className="w-[139px] whitespace-nowrap text-center">형태 수: 7</span>
            {sep}
            <span className="w-[163px] whitespace-nowrap text-center">모양 ID: 121</span>
            {sep}
            <button aria-label="레이어" className="ml-5 flex items-center gap-2">
                <Icon size="h-9 w-9" box="0 0 36 36"><path d="M18 4l15 11-15 11L3 15zM3 21l15 11 15-11" /></Icon>
                <Caret />
            </button>
            <button className="ml-[31px] flex items-center gap-[17px]">
                <Icon><path d="M9 2H3v6M23 2h6v6M29 24v6h-6M9 30H3v-6M12 9h5c3 0 4 2 4 4v6c0 2-1 4-4 4h-5z" /></Icon>
                집중
            </button>
            <button aria-label="재생" className="mx-[25px]"><Icon size="h-8 w-8"><circle cx="16" cy="16" r="15" /><path d="M13 10v12l8-6z" /></Icon></button>
            {sep}
            <button aria-label="축소" className="ml-[18px]"><Icon size="h-7 w-7"><path d="M3 16h26" /></Icon></button>
            <input
                type="range"
                aria-label="확대 비율"
                defaultValue={20}
                className="mx-[18px] h-[6px] w-48 appearance-none rounded-full bg-[linear-gradient(to_right,#444_22%,#f1f1f1_22%)] [&::-webkit-slider-thumb]:h-6 [&::-webkit-slider-thumb]:w-6 [&::-webkit-slider-thumb]:appearance-none [&::-webkit-slider-thumb]:rounded-full [&::-webkit-slider-thumb]:border-4 [&::-webkit-slider-thumb]:border-[#444] [&::-webkit-slider-thumb]:bg-white"
            />
            <button aria-label="확대"><Icon size="h-7 w-7"><path d="M16 3v26M3 16h26" /></Icon></button>
            <label className="ml-10 flex w-[111px] items-center">
                <select aria-label="배율" className="w-[76px] appearance-none bg-transparent text-[24px]"><option>86%</option></select>
                <Caret />
            </label>
            {sep}
            <button aria-label="전체 보기" className="ml-[26px]"><Icon><path d="M8 3H2v6M24 3h6v6M30 23v6h-6M8 29H2v-6M10 11h12v10H10z" /></Icon></button>
            <button aria-label="너비 맞춤" className="ml-8 mr-[34px]"><Icon><path d="M2 3h28v26H2zM8 16h16M12 12l-4 4 4 4M20 12l4 4-4 4" /></Icon></button>
        </footer>
    )
}

//################################## APP ###################################//
function App() {
    return (
        <div className="relative flex h-screen flex-col overflow-hidden bg-white font-['Inter','Noto_Sans_CJK_KR','Noto_Sans_CJK_SC',sans-serif]">
            <TopBar />
            <Ribbon />
            <div className="relative flex min-h-0 flex-1">
                <LeftRail />
                <SymbolPanel />
                <Canvas />
                <RightRail />
                <FillPanel />
                <svg className="pointer-events-none absolute left-[400px] top-[575px] h-[400px] w-[660px]" viewBox="0 0 660 400" fill="none" aria-hidden="true">
                    <path d="M14 379C230 308 440 194 605 50" stroke="#ea4025" strokeWidth="11" />
                    <path d="M641 14L584 32l37 38z" fill="#ea4025" />
                </svg>
            </div>
            <StatusBar />
        </div>
    )
}

export default App
